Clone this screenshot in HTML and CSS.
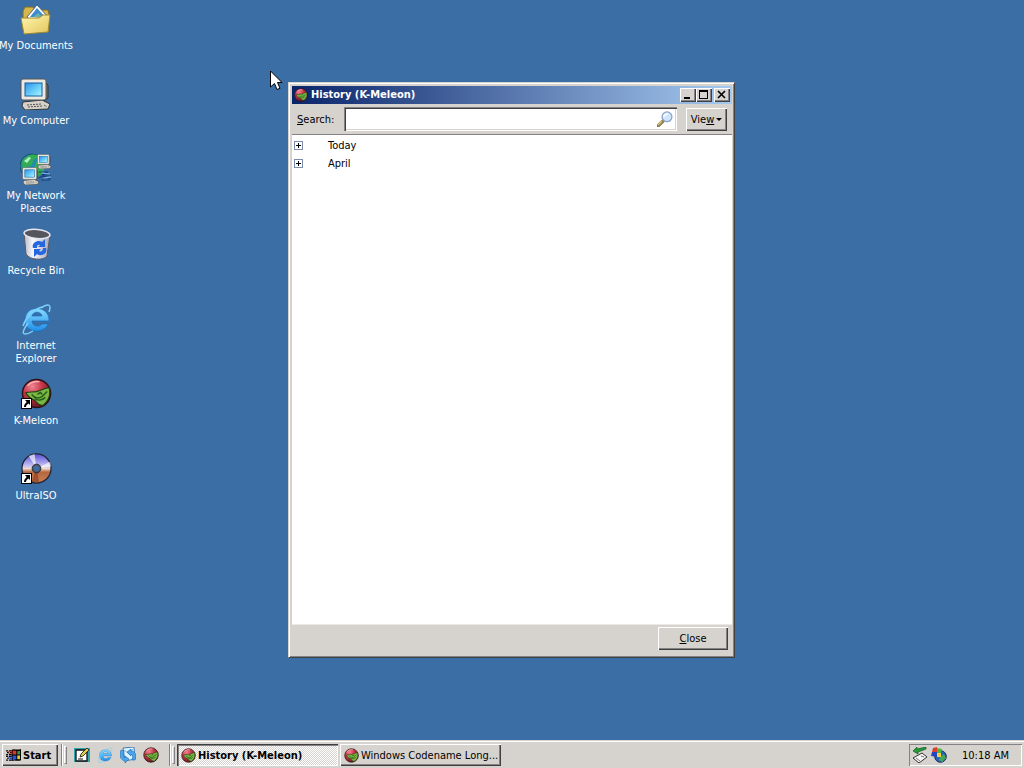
FILE: index.html
```html
<!DOCTYPE html>
<html lang="en">
<head>
<meta charset="utf-8">
<title>Desktop</title>
<link rel="stylesheet" href="styles.css">
</head>
<body>
<svg class="defs" aria-hidden="true">
  <defs>
    <radialGradient id="red" cx=".35" cy=".25" r=".8"><stop offset="0" stop-color="#f08590"/><stop offset=".45" stop-color="#c43446"/><stop offset="1" stop-color="#5c1420"/></radialGradient>
    <linearGradient id="screen" x1="0" y1="0" x2="1" y2="1"><stop offset="0" stop-color="#2c8fe8"/><stop offset=".6" stop-color="#6fd4fb"/><stop offset="1" stop-color="#b6f3ff"/></linearGradient>
    <linearGradient id="folder" x1="0" y1="0" x2="1" y2="1"><stop offset="0" stop-color="#fff7b0"/><stop offset="1" stop-color="#e3c55c"/></linearGradient>
    <linearGradient id="bin" x1="0" y1="0" x2="1" y2="0"><stop offset="0" stop-color="#b9b9c6"/><stop offset=".35" stop-color="#f8f8ff"/><stop offset="1" stop-color="#a4a4b3"/></linearGradient>
    <linearGradient id="ie" x1="0" y1="0" x2="0" y2="1"><stop offset="0" stop-color="#8adcff"/><stop offset="1" stop-color="#1f8ee8"/></linearGradient>
    <linearGradient id="disc" x1="0" y1="0" x2="0" y2="1"><stop offset="0" stop-color="#5a50d8"/><stop offset=".42" stop-color="#c9c4f4"/><stop offset=".5" stop-color="#f1d9cc"/><stop offset=".62" stop-color="#b5673f"/><stop offset="1" stop-color="#c98058"/></linearGradient>
    <symbol id="i-kmeleon" viewBox="0 0 32 32">
      <circle cx="16" cy="16" r="14.5" fill="url(#red)" stroke="#301014" stroke-width="1.5"/>
      <path d="M5 15c4 0 7-1 11-1 5-1 9-4 13-4 2 7 0 13-6 18-4 1-6-2-9-5-4-2-7-3-9-8z" fill="#7cb841" stroke="#1e3d14" stroke-width="1.2"/>
      <path d="M11 17c3 4 8 5 12 1l4-4M14 21c3 3 8 2 11-1M17 17l3-2 2 2" fill="none" stroke="#245b1d" stroke-width="1.5"/>
      <path d="M7 8c3-4 9-5 12-4" fill="none" stroke="#ffb1b8" stroke-width="1.5"/>
    </symbol>
    <symbol id="i-ie" viewBox="0 0 32 32">
      <path d="M29 18H12c0 5 7 7 10 3h6c-4 11-24 9-23-4C5 1 30 2 29 18zM12 13h10c-1-5-9-5-10 0z" fill="url(#ie)" fill-rule="evenodd" stroke="#1870c4" stroke-width=".7"/>
      <path d="M8 20c-5 7-6 11-3 11 2 0 5-1 8-3M21 5c7-5 11-4 8 4M22 4C14 6 6 14 3 23" fill="none" stroke="#7cd0fb" stroke-width="1.500"/>
    </symbol>
    <symbol id="i-pc" viewBox="0 0 32 32">
      <path d="M3 24l19-2 8 4-2 5-23 1-3-4z" fill="#d5d1c8" stroke="#353535"/>
      <path d="M7 27l14-1M8 29l15-1M24 27l3 2" stroke="#555" stroke-dasharray="2 1"/>
      <path d="M24 3l4 4v13l-4 3z" fill="#77736a" stroke="#333"/>
      <rect x="1" y="1" width="25" height="21" rx="2" fill="#ece9e0" stroke="#555"/>
      <rect x="5" y="5" width="17" height="13" fill="url(#screen)" stroke="#155ca4"/>
    </symbol>
    <symbol id="shortcut" viewBox="0 0 11 11">
      <rect x=".5" y=".5" width="10" height="10" fill="#fff" stroke="#000"/>
      <path d="M4 2h5v5L7.500 5.500C6 6.500 5 7.500 5 9H3c0-2 1-3.500 2.700-5z" fill="#000"/>
    </symbol>
    <symbol id="i-docs" viewBox="0 0 32 32">
      <path d="M3 8l2-4h8l2 3h13l1 4v17H3z" fill="#d7b64a" stroke="#7d6b2c"/>
      <path d="M7 14L17 2l13 14-11 12z" fill="#fff" stroke="#50697f"/>
      <path d="M10 14l7-9 8 9z" fill="#3a8bd2"/><path d="M13 14l5-4 6 5z" fill="#68afa8"/>
      <path d="M1 15h18l4-3h7l-2 17-24 2z" fill="url(#folder)" stroke="#a18934"/>
    </symbol>
    <symbol id="i-net" viewBox="0 0 32 32">
      <circle cx="12" cy="13" r="12" fill="#238cae" stroke="#164d66"/>
      <path d="M2 9c3-7 13-10 17-5l-6 3-1 5-5 2-4 4zM16 9h8v10l-6 5-4-6z" fill="#33ad54"/><path d="M4 8l5-4 2 1-4 5z" fill="#b5f0bf"/>
      <use href="#i-pc" x="17" y="1" width="15" height="15"/>
      <use href="#i-pc" x="2" y="14" width="18" height="18"/>
      <path d="M19 19h9l-6 3h9M19 25l4-2 8 3M21 27h9" fill="none" stroke="#153f83" stroke-width="1.200"/>
      <path d="M22 20l8 1M24 25l7-1" stroke="#8db9e6"/>
    </symbol>
    <symbol id="i-bin" viewBox="0 0 32 32">
      <path d="M4 5l2 21c3 6 18 7 21 2l3-21z" fill="url(#bin)" stroke="#5a5a66"/>
      <ellipse cx="17" cy="6" rx="13" ry="4.500" transform="rotate(5 17 6)" fill="#55555e" stroke="#e6e6ef" stroke-width="1.500"/>
      <path d="M13 20c-2-5 5-9 9-6l3-3v8h-7l2-2c-2-1-3 0-3 3zM26 20c2 6-5 9-9 6l-3 3v-8h7l-2 2c2 1 4 0 4-3z" fill="#2467df"/>
    </symbol>
    <symbol id="i-disc" viewBox="0 0 32 32">
      <circle cx="16" cy="16" r="15" fill="url(#disc)" stroke="#252535" stroke-width="1.300"/>
      <path d="M16 16L8 3l6-2zM16 16l14-7 1 5z" fill="#fff" opacity=".65"/><path d="M16 16l-5 14 8 1z" fill="#7a2e12" opacity=".5"/>
      <circle cx="16" cy="16" r="4.500" fill="#55555f" stroke="#292933"/><circle cx="16" cy="16" r="2.800" fill="#3a6ea5"/>
    </symbol>
  </defs>
</svg>

<main class="desktop">
  <nav class="shortcuts" aria-label="Desktop icons">
    <a class="shortcut" href="#"><svg class="big-icon"><use href="#i-docs"/></svg><span>My Documents</span></a>
    <a class="shortcut" href="#"><svg class="big-icon"><use href="#i-pc"/></svg><span>My Computer</span></a>
    <a class="shortcut" href="#"><svg class="big-icon"><use href="#i-net"/></svg><span>My Network<br>Places</span></a>
    <a class="shortcut" href="#"><svg class="big-icon"><use href="#i-bin"/></svg><span>Recycle Bin</span></a>
    <a class="shortcut" href="#"><svg class="big-icon"><use href="#i-ie"/></svg><span>Internet<br>Explorer</span></a>
    <a class="shortcut" href="#"><svg class="big-icon" viewBox="0 0 32 32"><use href="#i-kmeleon" x="1" y="0" width="31" height="31"/><use href="#shortcut" x="1" y="20" width="11" height="11"/></svg><span>K-Meleon</span></a>
    <a class="shortcut" href="#"><svg class="big-icon" viewBox="0 0 32 32"><use href="#i-disc" x="1" y="0" width="31" height="31"/><use href="#shortcut" x="1" y="20" width="11" height="11"/></svg><span>UltraISO</span></a>
  </nav>

  <section class="window" aria-labelledby="window-title">
    <header class="titlebar">
      <svg class="title-icon"><use href="#i-kmeleon"/></svg>
      <h1 id="window-title">History (K-Meleon)</h1>
      <div class="caption-group">
        <button class="caption" aria-label="Minimize"><svg viewBox="0 0 12 10"><path d="M2 7h6v2H2z"/></svg></button>
        <button class="caption" aria-label="Maximize"><svg viewBox="0 0 12 10"><path d="M1 0h9v9H1zM2 2v6h7V2z" fill-rule="evenodd"/></svg></button>
      </div>
      <button class="caption" aria-label="Close window"><svg viewBox="0 0 12 10"><path d="M2 1l7 7M9 1L2 8" stroke="#000" stroke-width="1.600"/></svg></button>
    </header>
    <div class="toolbar">
      <label for="search"><u>S</u>earch:</label>
      <div class="search-box">
        <input id="search" type="text">
        <svg class="magnifier" viewBox="0 0 16 16"><path d="M1 15l5-5" stroke="#8e7d45" stroke-width="3.400" stroke-linecap="round"/><path d="M1 14l4-4" stroke="#d9c98c" stroke-width="1.300"/><circle cx="10" cy="5.800" r="4.900" fill="#cfe6fb" stroke="#8ba3cc" stroke-width="1.300"/><path d="M7 6c0-2 2-3 4-3" fill="none" stroke="#fff" stroke-width="1.500"/></svg>
      </div>
      <button class="push view">Vie<u>w</u><span class="arrow"></span></button>
    </div>
    <ul class="tree">
      <li><button class="expander" aria-label="Expand Today"></button>Today</li>
      <li><button class="expander" aria-label="Expand April"></button>April</li>
    </ul>
    <footer class="actions"><button class="push close"><u>C</u>lose</button></footer>
  </section>

  <svg class="cursor" viewBox="0 0 13 21" aria-hidden="true"><path d="M.5 1v16l4-3.500 2.500 6 3-1.200-2.500-5.800H12z" fill="#fff" stroke="#000"/></svg>
</main>

<footer class="taskbar">
  <button class="start">
    <svg viewBox="0 0 17 15"><path d="M6 2c3-2 5 1 10-1v12c-4 2-6-1-10 1z" fill="#000"/><path d="M7 3c2-1 2 0 4 0v4H7z" fill="#d8382a"/><path d="M12 3.500l3-.5v4h-3z" fill="#2f9b42"/><path d="M7 8h4v4l-4 1z" fill="#2b55d0"/><path d="M12 8h3v4h-3z" fill="#e0c832"/><path d="M0 3h2M3 3h3M1 5h2M4 5h2M0 7h2M3 7h3M0 9h2M3 9h3M1 11h2M4 11h2M0 13h2M3 13h3" stroke="#000" stroke-width="1.300"/><path d="M2 4h3M3 6h3" stroke="#d43c35"/><path d="M2 10h3M3 12h3" stroke="#315ee0"/></svg>Start
  </button>
  <span class="divider"></span><span class="grip"></span>
  <nav class="quick" aria-label="Quick launch">
    <a href="#" aria-label="Show Desktop"><svg viewBox="0 0 16 16"><path d="M0 1h16v14H0z" fill="#32a6ad"/><path d="M2 3h11v11H2z" fill="#fff" stroke="#111" stroke-width="1.300"/><path d="M6 10l1-3 6-6 2 2-6 6z" fill="#eac94d" stroke="#29291b" stroke-width=".9"/><path d="M4 12h5" stroke="#111"/></svg></a>
    <a href="#" aria-label="Internet Explorer"><svg><use href="#i-ie"/></svg></a>
    <a href="#" aria-label="Outlook Express"><svg viewBox="0 0 16 16"><path d="M3 1l11-1 1 12-10 2z" fill="#dff3ff" stroke="#3e7eb8"/><path d="M4 3l5 4 4-5" fill="none" stroke="#7fb0da"/><path d="M1 3C-1 8 0 13 5 14v2l4-4-4-3v2C3 10 3 7 4 4zM15 13c2-5 0-9-4-9V2L7 5l4 4V7c2 1 2 3 1 6z" fill="#4ba6ea" stroke="#1d67b0" stroke-width=".6"/></svg></a>
    <a href="#" aria-label="K-Meleon"><svg><use href="#i-kmeleon"/></svg></a>
  </nav>
  <span class="divider"></span><span class="grip"></span>
  <div class="tasks">
    <button class="task active"><svg><use href="#i-kmeleon"/></svg><span>History (K-Meleon)</span></button>
    <button class="task"><svg><use href="#i-kmeleon"/></svg><span>Windows Codename Long...</span></button>
  </div>
  <div class="tray">
    <svg viewBox="0 0 16 16" role="img" aria-label="Safely remove hardware"><path d="M1 11l9-5 5 4-8 6z" fill="#f4f4f4" stroke="#333"/><path d="M4 11l4 3M9 9l3 1" stroke="#777"/><path d="M1 4l4-4v2l9-2v2L6 5v2z" fill="#239b36" stroke="#125820" stroke-width=".7"/></svg>
    <svg viewBox="0 0 16 16" role="img" aria-label="Updates"><circle cx="9.500" cy="9.500" r="5.800" fill="#2a60b7" stroke="#142b57"/><path d="M9 10l4-3 2 4-4 4-3-2z" fill="#43a85a"/><path d="M2 1l4-1v5H1z" fill="#dd4030"/><path d="M6 1l5 1-1 4H6z" fill="#47ba3e"/><path d="M1 5h5v5L0 9z" fill="#2445bd"/><path d="M6 6h4v4H6z" fill="#f0d23d"/></svg>
    <time>10:18 AM</time>
  </div>
</footer>
</body>
</html>
```

FILE: styles.css
```css
* { box-sizing: border-box; }

:root {
  --face: #d6d3ce;
  --light: #fff;
  --shade: #848284;
  --dark: #404040;
}

body {
  margin: 0;
  height: 100vh;
  display: flex;
  flex-direction: column;
  overflow: hidden;
  background: #3a6ea5;
  color: #000;
  font: 11px/13px "DejaVu Sans Condensed", "DejaVu Sans", sans-serif;
}

button, input { font: inherit; color: inherit; }
button { padding: 0; border: 0; border-radius: 0; background: var(--face); }
svg { display: block; flex: none; }
.defs { position: absolute; width: 0; height: 0; }

.desktop { position: relative; flex: 1; min-height: 0; }

.shortcuts {
  display: grid;
  grid-auto-rows: 75px;
  grid-template-columns: 72px;
  width: 72px;
}
.shortcut {
  display: flex;
  flex-direction: column;
  align-items: center;
  gap: 4px;
  padding-top: 3px;
  color: #fff;
  text-align: center;
  text-decoration: none;
  white-space: nowrap;
}
.big-icon { width: 32px; height: 32px; }

.window {
  position: absolute;
  left: 288px;
  top: 82px;
  width: 447px;
  height: 576px;
  display: flex;
  flex-direction: column;
  padding: 3px 2px 3px 3px;
  border: 1px solid;
  border-color: var(--face) var(--dark) var(--dark) var(--face);
  background: var(--face);
  box-shadow: inset 1px 1px var(--light), inset -1px -1px var(--shade);
}

.titlebar {
  display: flex;
  align-items: center;
  gap: 2px;
  height: 18px;
  padding: 0 2px;
  background: linear-gradient(to right, #0a246a, #a6caf0);
  color: #fff;
}
.title-icon { width: 14px; height: 14px; }
.titlebar h1 { flex: 1; margin: 0 0 0 1px; font-size: 11px; line-height: 18px; }
.caption-group { display: flex; }
.caption {
  width: 16px;
  height: 14px;
  padding: 2px;
  box-shadow: inset 1px 1px var(--light), inset -1px -1px var(--dark), inset -2px -2px var(--shade);
}
.caption svg { width: 12px; height: 10px; }

.toolbar {
  display: flex;
  align-items: center;
  height: 31px;
  padding: 0 5px;
  border-bottom: 1px solid var(--shade);
}
.toolbar label { width: 47px; }
.search-box {
  flex: 1;
  display: flex;
  align-items: center;
  height: 24px;
  padding: 2px 4px 2px 2px;
  background: #fff;
  box-shadow: inset 1px 1px var(--shade), inset 2px 2px var(--dark), inset -1px -1px var(--light), inset -2px -2px var(--face);
}
.search-box input { flex: 1; min-width: 0; padding: 0 3px; border: 0; outline: 0; background: none; }
.magnifier { width: 16px; height: 16px; }

.push {
  height: 23px;
  box-shadow: inset 1px 1px var(--light), inset -1px -1px var(--dark), inset -2px -2px var(--shade);
}
.view { display: flex; align-items: center; justify-content: center; width: 41px; margin-left: 9px; }
.arrow { margin-left: 2px; border: 3px solid transparent; border-top-color: #000; border-bottom: 0; }

.tree {
  flex: 1;
  min-height: 0;
  margin: 0;
  padding: 1px 2px;
  overflow: auto;
  background: #fff;
  list-style: none;
}
.tree li { display: flex; align-items: center; gap: 25px; height: 18px; }
.expander {
  width: 9px;
  height: 9px;
  border: 1px solid #7b8cad;
  background:
    linear-gradient(#000, #000) center / 5px 1px no-repeat,
    linear-gradient(#000, #000) center / 1px 5px no-repeat,
    #fff;
}

.actions {
  display: flex;
  justify-content: flex-end;
  height: 30px;
  padding: 2px 4px;
  border-top: 1px solid #ece9e4;
}
.close { width: 70px; }

.taskbar {
  display: flex;
  align-items: center;
  height: 28px;
  padding: 1px 2px 0;
  border-top: 1px solid var(--face);
  background: var(--face);
  box-shadow: inset 0 1px var(--light);
}
.start {
  display: flex;
  align-items: center;
  gap: 1px;
  width: 56px;
  height: 22px;
  padding-left: 4px;
  font-weight: bold;
  box-shadow: inset 1px 1px var(--light), inset -1px -1px var(--dark), inset -2px -2px var(--shade);
}
.start svg { width: 16px; height: 14px; }
.divider { width: 2px; height: 22px; margin-left: 3px; border-left: 1px solid var(--shade); border-right: 1px solid var(--light); }
.grip {
  width: 3px;
  height: 18px;
  margin-left: 1px;
  border: 1px solid;
  border-color: var(--light) var(--shade) var(--shade) var(--light);
}
.quick { display: flex; gap: 7px; margin: 0 7px; }
.quick svg { width: 16px; height: 16px; }

.tasks { flex: 1; display: flex; gap: 2px; min-width: 0; margin-left: 2px; }
.task {
  display: flex;
  align-items: center;
  gap: 2px;
  width: 161px;
  height: 22px;
  padding: 0 4px;
  white-space: nowrap;
  box-shadow: inset 1px 1px var(--light), inset -1px -1px var(--dark), inset -2px -2px var(--shade);
}
.task svg { width: 15px; height: 15px; }
.task.active {
  padding-top: 1px;
  background: repeating-conic-gradient(#fff 0 25%, var(--face) 0 50%) 0 0 / 2px 2px;
  font-weight: bold;
  box-shadow: inset 1px 1px var(--dark), inset 2px 2px var(--shade), inset -1px -1px var(--light);
}
.tray {
  display: flex;
  align-items: center;
  gap: 3px;
  height: 22px;
  padding: 0 13px 0 3px;
  box-shadow: inset 1px 1px var(--shade), inset -1px -1px var(--light);
}
.tray svg { width: 16px; height: 16px; }
.tray time { margin-left: 12px; }

.cursor { position: absolute; left: 270px; top: 70px; width: 13px; height: 21px; }
```
